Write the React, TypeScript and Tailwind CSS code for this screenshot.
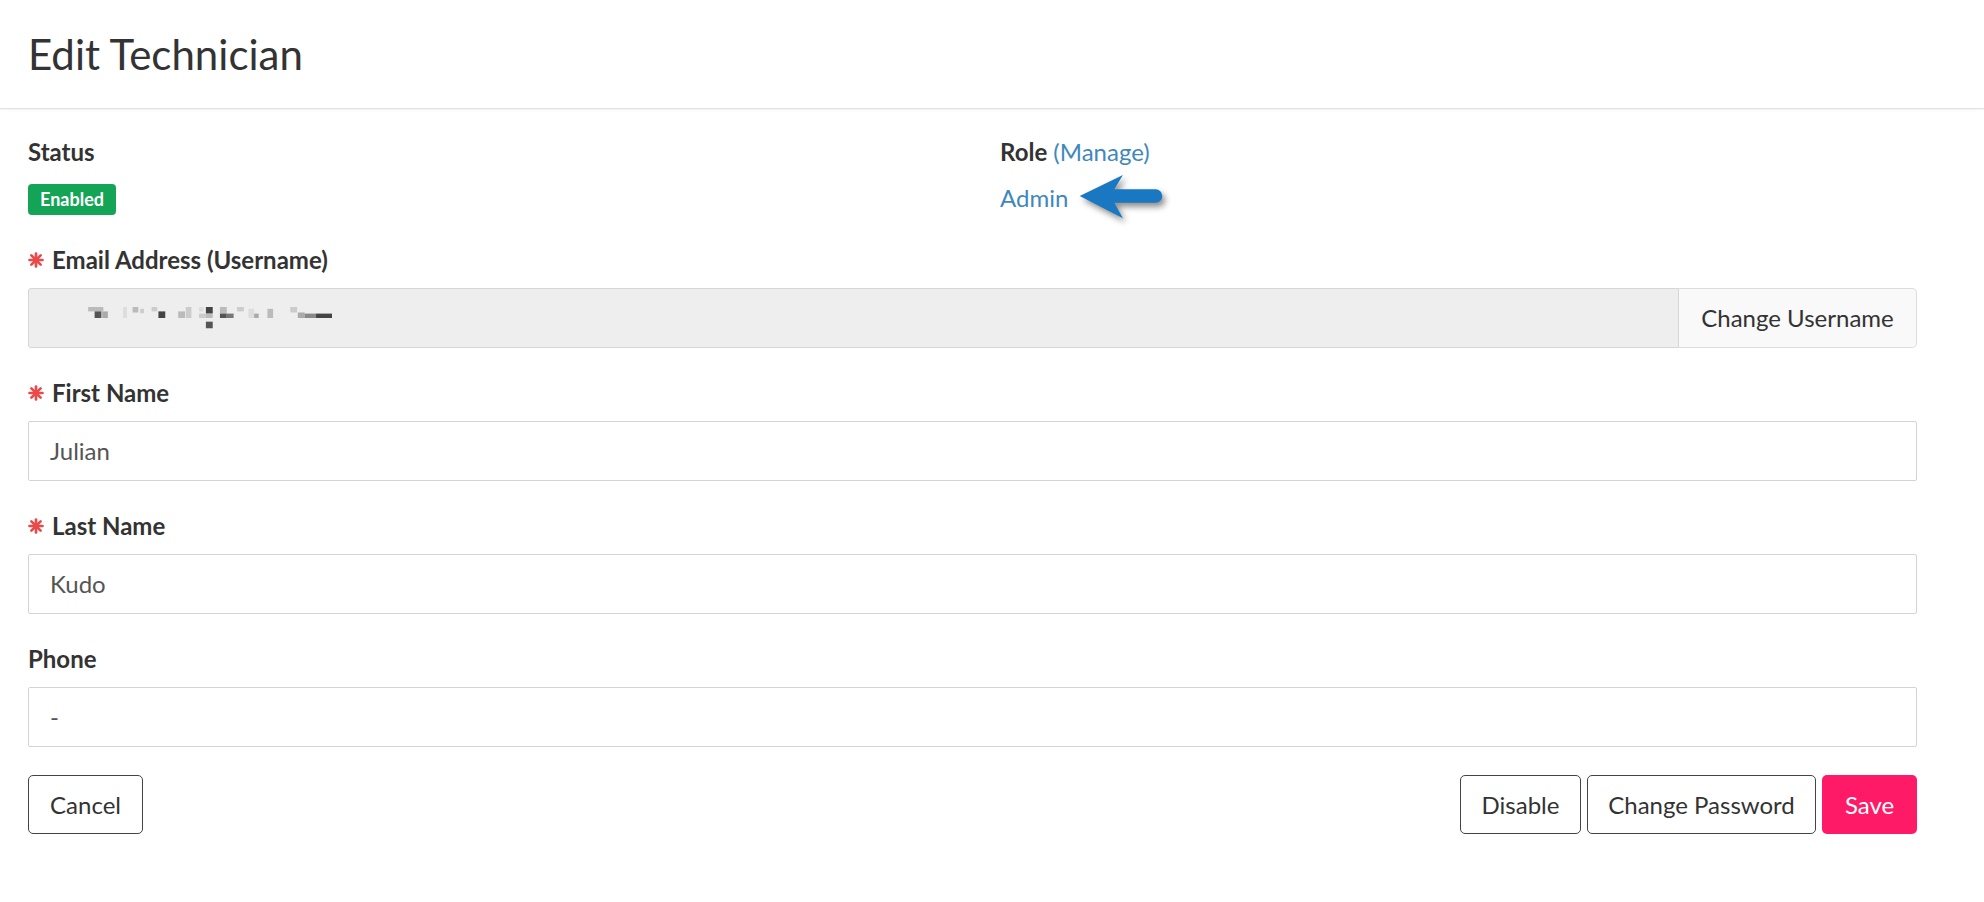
import React from "react"

const blur: [number, number, number, number, string][] = [
  [3, 0, 40, 12, "#bbb"],
  [20, 12, 18, 18, "#555"],
  [40, 12, 15, 18, "#aaa"],
  [95, 0, 10, 30, "#ddd"],
  [120, 0, 15, 15, "#bbb"],
  [140, 5, 10, 12, "#ccc"],
  [170, 0, 15, 12, "#ccc"],
  [188, 12, 18, 18, "#444"],
  [240, 12, 18, 18, "#bbb"],
  [260, 0, 15, 30, "#ccc"],
  [295, 0, 12, 12, "#ddd"],
  [313, 0, 18, 18, "#444"],
  [295, 18, 18, 12, "#ccc"],
  [313, 18, 18, 12, "#bbb"],
  [313, 40, 18, 18, "#555"],
  [350, 0, 18, 18, "#bbb"],
  [350, 18, 18, 12, "#555"],
  [368, 18, 18, 12, "#777"],
  [395, 0, 18, 12, "#ccc"],
  [425, 5, 15, 25, "#ddd"],
  [440, 18, 12, 12, "#aaa"],
  [475, 5, 15, 25, "#bbb"],
  [535, 0, 18, 15, "#ccc"],
  [555, 15, 18, 15, "#aaa"],
  [573, 18, 30, 12, "#888"],
  [603, 18, 42, 12, "#444"],
]

function Asterisk() {
  return (
    <svg width="16" height="16" viewBox="0 0 16 16" className="mr-[8px] shrink-0">
      <g stroke="#ea4a4a" strokeWidth="2.7" strokeLinecap="round">
        <line x1="8" y1="1.5" x2="8" y2="14.5" />
        <line x1="1.5" y1="8" x2="14.5" y2="8" />
        <line x1="3.4" y1="3.4" x2="12.6" y2="12.6" />
        <line x1="12.6" y1="3.4" x2="3.4" y2="12.6" />
      </g>
    </svg>
  )
}

function Label({ children, required }: { children: React.ReactNode; required?: boolean }) {
  return (
    <div className="mb-[13px] flex h-[30px] items-center text-[24px] font-bold leading-[30px] text-[#333]">
      {required && <Asterisk />}
      {children}
    </div>
  )
}

function TextField({ value }: { value: string }) {
  return (
    <div className="flex h-[60px] items-center rounded-[2px] border border-[#d4d4d4] bg-white px-[21px] text-[24px] text-[#555]">
      {value}
    </div>
  )
}

function Button({ children, className }: { children: React.ReactNode; className?: string }) {
  return (
    <button
      className={
        "flex h-[59px] items-center justify-center rounded-[5px] text-[24px] " + (className ?? "")
      }
    >
      {children}
    </button>
  )
}

export default function App() {
  return (
    <div className="min-h-screen bg-white font-['Lato',sans-serif] text-[#333]">
      <header className="flex h-[109px] items-center border-b border-[#e2e2e2] px-[28px] shadow-[0_1px_2px_rgba(0,0,0,0.06)]">
        <h1 className="text-[42px] font-normal text-[#333]">Edit Technician</h1>
      </header>

      <div className="pl-[28px] pr-[67px] pt-[28px]">
        <div className="grid grid-cols-[972px_1fr]">
          <div>
            <div className="h-[30px] text-[24px] font-bold leading-[30px]">Status</div>
            <div className="mt-[17px] inline-flex h-[31px] items-center rounded-[4px] bg-[#13a456] px-[12px] text-[18px] font-bold text-white">
              Enabled
            </div>
          </div>
          <div>
            <div className="h-[30px] text-[24px] leading-[30px]">
              <span className="font-bold">Role</span>{" "}
              <span className="text-[#3f88bd]">(Manage)</span>
            </div>
            <div className="mt-[16px] flex h-[30px] items-center">
              <span className="text-[24px] text-[#3f88bd]">Admin</span>
              <svg
                width="88"
                height="48"
                viewBox="0 0 90 50"
                className="ml-[9px] drop-shadow-[3px_4px_3px_rgba(0,0,0,0.45)]"
              >
                <path
                  d="M2 23 L47 1 L38 16 L81 16 A7 7 0 0 1 81 30 L38 30 L47 46 Z"
                  fill="#1a78c2"
                />
              </svg>
            </div>
          </div>
        </div>

        <div className="mt-[30px]">
          <Label required>Email Address (Username)</Label>
          <div className="flex h-[60px]">
            <div className="flex flex-1 items-center rounded-l-[3px] border border-[#d6d6d6] bg-[#eeeeee] pl-[58px]">
              <svg width="245" height="22" viewBox="0 0 645 60" preserveAspectRatio="none">
                {blur.map(([x, y, w, h, c], i) => (
                  <rect key={i} x={x} y={y} width={w} height={h} fill={c} />
                ))}
              </svg>
            </div>
            <div className="flex w-[238px] items-center justify-center rounded-r-[5px] border border-l-0 border-[#dcdcdc] bg-[#f9f9f9] text-[24px] text-[#333]">
              Change Username
            </div>
          </div>
        </div>

        <div className="mt-[30px]">
          <Label required>First Name</Label>
          <TextField value="Julian" />
        </div>

        <div className="mt-[30px]">
          <Label required>Last Name</Label>
          <TextField value="Kudo" />
        </div>

        <div className="mt-[30px]">
          <Label>Phone</Label>
          <TextField value="-" />
        </div>

        <div className="mt-[28px] flex items-center">
          <Button className="w-[115px] border border-[#444] bg-white text-[#333]">Cancel</Button>
          <div className="ml-auto flex gap-[6px]">
            <Button className="w-[121px] border border-[#444] bg-white text-[#333]">Disable</Button>
            <Button className="w-[229px] border border-[#444] bg-white text-[#333]">
              Change Password
            </Button>
            <Button className="w-[95px] bg-[#fe1a66] text-white">Save</Button>
          </div>
        </div>
      </div>
    </div>
  )
}
